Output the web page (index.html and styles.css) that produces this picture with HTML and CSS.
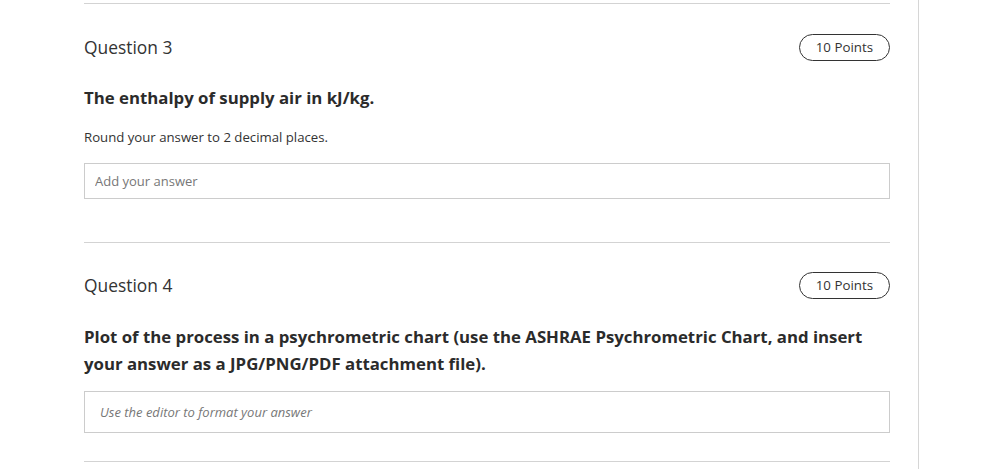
FILE: index.html
```html
<!DOCTYPE html>
<html lang="en">
  <head>
    <meta charset="UTF-8" />
    <meta name="viewport" content="width=device-width, initial-scale=1.0" />
    <title>Quiz</title>
    <link rel="stylesheet" href="styles.css">
  </head>
  <body>
    <div class="page">
      <section class="question q3">
        <div class="question-head">
          <h2>Question 3</h2>
          <span class="points">10 Points</span>
        </div>
        <p class="question-title">The enthalpy of supply air in kJ/kg.</p>
        <p class="hint">Round your answer to 2 decimal places.</p>
        <input type="text" class="answer" placeholder="Add your answer" />
      </section>

      <section class="question q4">
        <div class="question-head">
          <h2>Question 4</h2>
          <span class="points">10 Points</span>
        </div>
        <p class="question-title">Plot of the process in a psychrometric chart (use the ASHRAE Psychrometric Chart, and insert your answer as a JPG/PNG/PDF attachment file).</p>
        <div class="editor">Use the editor to format your answer</div>
      </section>

      <section class="question"></section>
    </div>
  </body>
</html>
```

FILE: styles.css
```css
body {
  font-family: "Open Sans", Arial, sans-serif;
  background-color: #ffffff;
  color: #333333;
  margin: 0;
  padding: 0;
}

.page {
  width: 919px;
  min-height: 469px;
  box-sizing: border-box;
  padding: 3px 28px 0 84px;
  border-right: 1px solid #d6d6d6;
}

.question {
  border-top: 1px solid #d3d3d3;
  padding-top: 30px;
}

.q3 {
  padding-bottom: 43px;
}

.q4 {
  padding-top: 29px;
  padding-bottom: 28px;
}

.q4 .question-title {
  margin-top: 24px;
}

.question-head {
  display: flex;
  justify-content: space-between;
  align-items: center;
}

.question-head h2 {
  margin: 0 0 1px;
  font-size: 17.4px;
  font-weight: 400;
  line-height: 23px;
  color: #333333;
}

.points {
  display: inline-block;
  box-sizing: border-box;
  height: 27px;
  line-height: 25px;
  padding: 0 16px;
  border: 1px solid #333333;
  border-radius: 14px;
  font-size: 13.3px;
  color: #333333;
}

.question-title {
  margin: 23px 0 0;
  font-size: 16.8px;
  font-weight: 700;
  line-height: 27px;
  color: #2b2b2b;
}

.hint {
  margin: 16px 0 0;
  font-size: 13.2px;
  line-height: 20px;
  color: #333333;
}

.answer {
  display: block;
  width: 100%;
  box-sizing: border-box;
  height: 36px;
  margin-top: 16px;
  padding: 0 10px;
  border: 1px solid #cccccc;
  border-radius: 0;
  font-family: "Open Sans", Arial, sans-serif;
  font-size: 13px;
  color: #333333;
}

.answer::placeholder {
  color: #777777;
}

.editor {
  box-sizing: border-box;
  height: 42px;
  margin-top: 14px;
  padding: 0 15px;
  border: 1px solid #cccccc;
  display: flex;
  align-items: center;
  font-size: 13px;
  font-style: italic;
  color: #777777;
}
```
